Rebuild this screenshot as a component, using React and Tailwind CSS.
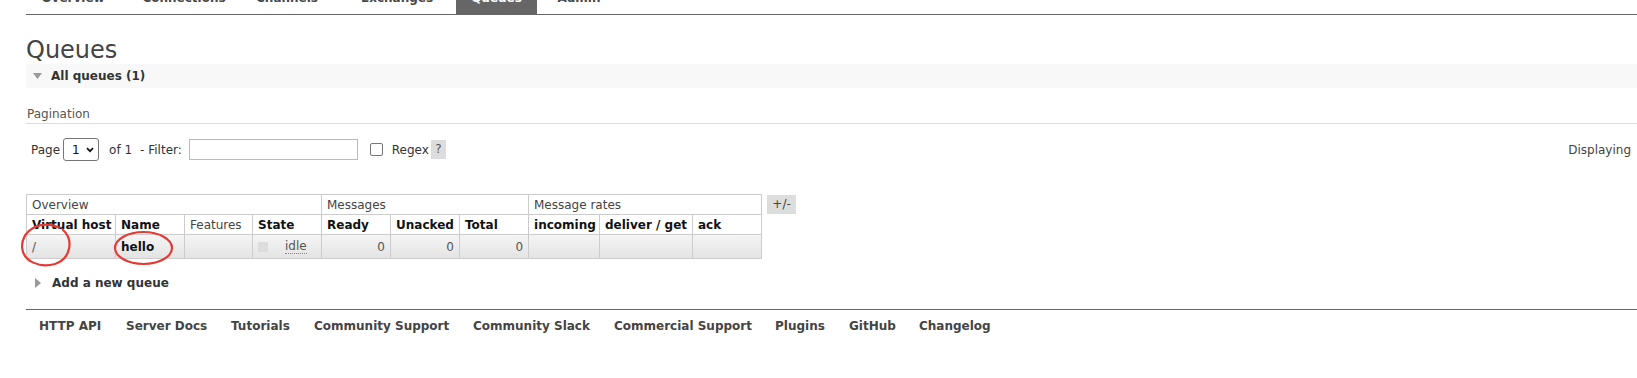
import React from 'react'

const tabs = [
    { label: 'Overview', cls: 'w-[94px]' },
    { label: 'Connections', cls: 'w-[128px]' },
    { label: 'Channels', cls: 'w-[78px]' },
    { label: 'Exchanges', cls: 'w-[118px] ml-[12px]' },
    { label: 'Queues', cls: 'w-[81px] bg-[#666] text-white', active: true },
    { label: 'Admin', cls: 'w-[84px]' },
]

const footerLinks = [
    { label: 'HTTP API', cls: 'w-[87px]' },
    { label: 'Server Docs', cls: 'w-[105px]' },
    { label: 'Tutorials', cls: 'w-[83px]' },
    { label: 'Community Support', cls: 'w-[159px]' },
    { label: 'Community Slack', cls: 'w-[141px]' },
    { label: 'Commercial Support', cls: 'w-[161px]' },
    { label: 'Plugins', cls: 'w-[74px]' },
    { label: 'GitHub', cls: 'w-[70px]' },
    { label: 'Changelog', cls: '' },
]

const cell = 'border border-[#ccc] px-[5px] leading-[14px] text-left align-middle'

function QueuesTable() {
    return (
        <div className="mt-[33px] flex items-start">
            <table className="table-fixed border-collapse w-[735px]">
                <colgroup>
                    <col className="w-[89px]" />
                    <col className="w-[69px]" />
                    <col className="w-[68px]" />
                    <col className="w-[69px]" />
                    <col className="w-[69px]" />
                    <col className="w-[69px]" />
                    <col className="w-[69px]" />
                    <col className="w-[71px]" />
                    <col className="w-[93px]" />
                    <col className="w-[69px]" />
                </colgroup>
                <thead>
                    <tr className="h-[20px] text-[#444]">
                        <th colSpan={4} className={`${cell} font-normal`}>Overview</th>
                        <th colSpan={3} className={`${cell} font-normal`}>Messages</th>
                        <th colSpan={3} className={`${cell} font-normal`}>Message rates</th>
                    </tr>
                    <tr className="h-[20px] text-[#111]">
                        <th className={`${cell} font-bold whitespace-nowrap`}>Virtual host</th>
                        <th className={`${cell} font-bold`}>Name</th>
                        <th className={`${cell} font-normal text-[#444]`}>Features</th>
                        <th className={`${cell} font-bold`}>State</th>
                        <th className={`${cell} font-bold`}>Ready</th>
                        <th className={`${cell} font-bold`}>Unacked</th>
                        <th className={`${cell} font-bold`}>Total</th>
                        <th className={`${cell} font-bold`}>incoming</th>
                        <th className={`${cell} font-bold whitespace-nowrap`}>deliver / get</th>
                        <th className={`${cell} font-bold`}>ack</th>
                    </tr>
                </thead>
                <tbody>
                    <tr className="h-[24px] bg-linear-to-b from-[#f5f5f5] to-[#e3e3e3] text-[#555]">
                        <td className={cell}>/</td>
                        <td className={`${cell} font-bold text-[#111]`}>hello</td>
                        <td className={cell}></td>
                        <td className={cell}>
                            <div className="flex items-center">
                                <span className="w-[10px] h-[10px] bg-[#ddd]" />
                                <span className="ml-[17px] leading-[13px] border-b border-dotted border-[#888]">idle</span>
                            </div>
                        </td>
                        <td className={`${cell} text-right`}>0</td>
                        <td className={`${cell} text-right`}>0</td>
                        <td className={`${cell} text-right`}>0</td>
                        <td className={cell}></td>
                        <td className={cell}></td>
                        <td className={cell}></td>
                    </tr>
                </tbody>
            </table>
            <div className="ml-[5px] mt-[1px] w-[29px] h-[19px] bg-[#ddd] text-[#444] text-center leading-[19px]">+/-</div>
        </div>
    )
}

export default function App() {
    return (
        <div className="relative w-full min-h-[378px] bg-white text-[12px] text-[#484848] font-['DejaVu_Sans',sans-serif]">
            <div className="pl-[26px]">
                <div className="h-[15px] overflow-hidden border-b border-[#666]">
                    <div className="flex -mt-[16px]">
                        {tabs.map((t) => (
                            <div key={t.label} className={`h-[30px] pt-[7px] leading-[14px] font-bold text-center ${t.cls}`}>
                                {t.label}
                            </div>
                        ))}
                    </div>
                </div>

                <h1 className="mt-[23px] text-[24px] leading-[24px] font-normal text-[#444]">Queues</h1>

                <div className="mt-[2px] h-[24px] bg-[#f8f8f8] flex items-center">
                    <svg className="ml-[7px]" width="9" height="6" viewBox="0 0 9 6">
                        <path d="M0 0h9L4.5 6z" fill="#999" />
                    </svg>
                    <span className="ml-[9px] font-bold text-[#333]">All queues (1)</span>
                </div>

                <div className="mt-[19px] pl-[1px] pb-[2px] leading-[14px] border-b border-[#ddd] text-[#555]">Pagination</div>

                <div className="mt-[14px] h-[23px] flex items-center pl-[5px] pr-[6px] text-[#333]">
                    <span>Page</span>
                    <div className="ml-[3px] w-[36px] h-[23px] border border-[#767676] rounded-[3px] flex items-center pl-[8px]">
                        <span className="text-[#111]">1</span>
                        <svg className="ml-[6px]" width="8" height="6" viewBox="0 0 8 6">
                            <path d="M1 1.2l3 3 3-3" stroke="#111" strokeWidth="1.7" fill="none" />
                        </svg>
                    </div>
                    <span className="ml-[10px]">of 1</span>
                    <span className="ml-[8px]">- Filter:</span>
                    <div className="ml-[7px] w-[169px] h-[21px] border border-[#bbb] bg-white" />
                    <div className="ml-[12px] w-[13px] h-[13px] border border-[#767676] rounded-[2px] bg-white" />
                    <span className="ml-[9px]">Regex</span>
                    <span className="ml-[2px] w-[15px] h-[19px] bg-[#ddd] text-center leading-[19px] text-[#555]">?</span>
                    <span className="ml-auto text-[#444]">Displaying</span>
                </div>

                <QueuesTable />

                <div className="mt-[17px] flex items-center leading-[14px]">
                    <svg className="ml-[9px]" width="6" height="10" viewBox="0 0 6 10">
                        <path d="M0 0l6 5-6 5z" fill="#999" />
                    </svg>
                    <span className="ml-[11px] font-bold text-[#333]">Add a new queue</span>
                </div>

                <div className="mt-[19px] border-t border-[#666] pt-[9px] pl-[13px] flex leading-[14px] font-bold text-[#444]">
                    {footerLinks.map((l) => (
                        <span key={l.label} className={`whitespace-nowrap ${l.cls}`}>{l.label}</span>
                    ))}
                </div>
            </div>

            <svg className="absolute top-0 left-0 pointer-events-none" width="1637" height="378">
                <path d="M60 228 C40 219 22 230 22 247 C23 262 40 268 55 264 C70 259 75 240 62 229" stroke="#e53935" strokeWidth="2.2" fill="none" />
                <ellipse cx="143.5" cy="248" rx="28.5" ry="16" stroke="#e53935" strokeWidth="2.2" fill="none" />
            </svg>
        </div>
    )
}
